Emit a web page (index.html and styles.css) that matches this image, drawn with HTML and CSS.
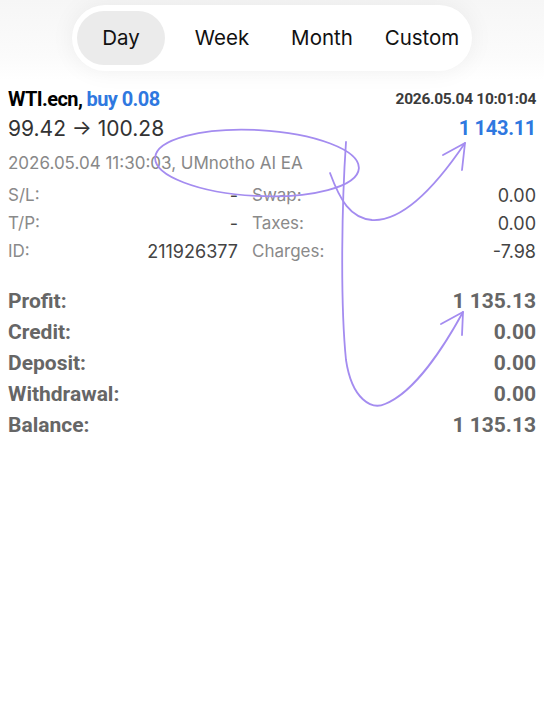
FILE: index.html
```html
<!DOCTYPE html>
<html>
<head>
<meta charset="utf-8">
<link rel="stylesheet" href="styles.css">
</head>
<body>
<div class="page">
  <header class="top">
    <nav class="seg">
      <span class="seg-item active">Day</span>
      <span class="seg-item">Week</span>
      <span class="seg-item">Month</span>
      <span class="seg-item">Custom</span>
    </nav>
  </header>
  <main class="deal">
    <div class="row title">
      <span class="sym">WTI.ecn, <span class="blue">buy 0.08</span></span>
      <span class="time">2026.05.04 10:01:04</span>
    </div>
    <div class="row prices">
      <span class="price">99.42 → 100.28</span>
      <span class="pl blue">1 143.11</span>
    </div>
    <div class="meta">2026.05.04 11:30:03, UMnotho AI EA</div>
    <div class="grid">
      <span class="lbl">S/L:</span><span class="val">-</span><span class="lbl2">Swap:</span><span class="val2">0.00</span>
      <span class="lbl">T/P:</span><span class="val">-</span><span class="lbl2">Taxes:</span><span class="val2">0.00</span>
      <span class="lbl">ID:</span><span class="val">211926377</span><span class="lbl2">Charges:</span><span class="val2">-7.98</span>
    </div>
    <div class="totals">
      <div class="trow"><span>Profit:</span><span>1 135.13</span></div>
      <div class="trow"><span>Credit:</span><span>0.00</span></div>
      <div class="trow"><span>Deposit:</span><span>0.00</span></div>
      <div class="trow"><span>Withdrawal:</span><span>0.00</span></div>
      <div class="trow"><span>Balance:</span><span>1 135.13</span></div>
    </div>
  </main>
  <svg class="marks" width="544" height="720" viewBox="0 0 544 720" fill="none" stroke="#a48cf0" stroke-width="1.8" stroke-linecap="round" stroke-linejoin="round">
    <ellipse cx="257" cy="163" rx="102" ry="33" transform="rotate(3 257 163)"/>
    <path d="M346 142 C 342 200, 340 300, 346 360 C 352 400, 372 410, 385 404 C 415 392, 445 345, 463 312"/>
    <path d="M441 324 L463 312 L462 335"/>
    <path d="M330 173 C 340 200, 350 218, 372 220 C 405 222, 440 180, 465 143"/>
    <path d="M443 155 L465 143 L462 170"/>
  </svg>
</div>
</body>
</html>
```

FILE: styles.css
```css
html, body {
  margin: 0;
  padding: 0;
  background: #fff;
}
.page {
  position: relative;
  width: 544px;
  height: 720px;
  overflow: hidden;
  font-family: "Inter", "Roboto", sans-serif;
}
.top {
  display: flex;
  justify-content: center;
  padding-top: 5px;
  height: 80px;
  box-sizing: border-box;
  background: linear-gradient(#f6f6f6, #fbfbfb 70%, #fff);
}
.seg {
  display: flex;
  align-items: center;
  width: 400px;
  height: 66px;
  box-sizing: border-box;
  padding: 0 0 0 5px;
  background: #fff;
  border-radius: 33px;
  box-shadow: 0 0 24px rgba(0,0,0,0.06);
}
.seg-item {
  flex: 0 0 100px;
  text-align: center;
  font-size: 20.5px;
  color: #111;
  line-height: 54px;
}
.seg-item.active {
  flex: 0 0 88px;
  margin-right: 7px;
  background: #ebebeb;
  border-radius: 27px;
}
.deal {
  padding: 5px 8px 0 8px;
}
.row {
  display: flex;
  justify-content: space-between;
  align-items: center;
}
.title {
  height: 28px;
}
.sym {
  font-family: "Roboto", sans-serif;
  font-weight: bold;
  font-size: 20px;
  color: #000;
  letter-spacing: -0.6px;
}
.blue {
  color: #2f78e0;
}
.time {
  font-family: "Roboto", sans-serif;
  font-weight: bold;
  font-size: 15.5px;
  letter-spacing: -0.3px;
  color: #3b3b3b;
}
.prices {
  height: 30px;
}
.price {
  font-size: 21px;
  color: #333;
}
.pl {
  font-family: "Roboto", sans-serif;
  font-weight: bold;
  font-size: 20px;
  letter-spacing: -0.3px;
}
.meta {
  margin-top: 6px;
  line-height: 28px;
  font-size: 17px;
  color: #888;
}
.grid {
  display: grid;
  grid-template-columns: 40px 190px 1fr auto;
  grid-auto-rows: 28px;
  align-items: center;
  margin-top: 4px;
  font-size: 17px;
  color: #8a8a8a;
}
.val {
  text-align: right;
  font-size: 18px;
  color: #444;
}
.lbl2 {
  padding-left: 14px;
}
.val2 {
  text-align: right;
  font-size: 18px;
  color: #444;
}
.totals {
  margin-top: 20px;
  font-family: "Roboto", sans-serif;
  font-weight: bold;
  font-size: 21px;
  color: #666;
}
.trow {
  display: flex;
  justify-content: space-between;
  align-items: center;
  height: 31px;
}
.marks {
  position: absolute;
  left: 0;
  top: 0;
  pointer-events: none;
}
```
